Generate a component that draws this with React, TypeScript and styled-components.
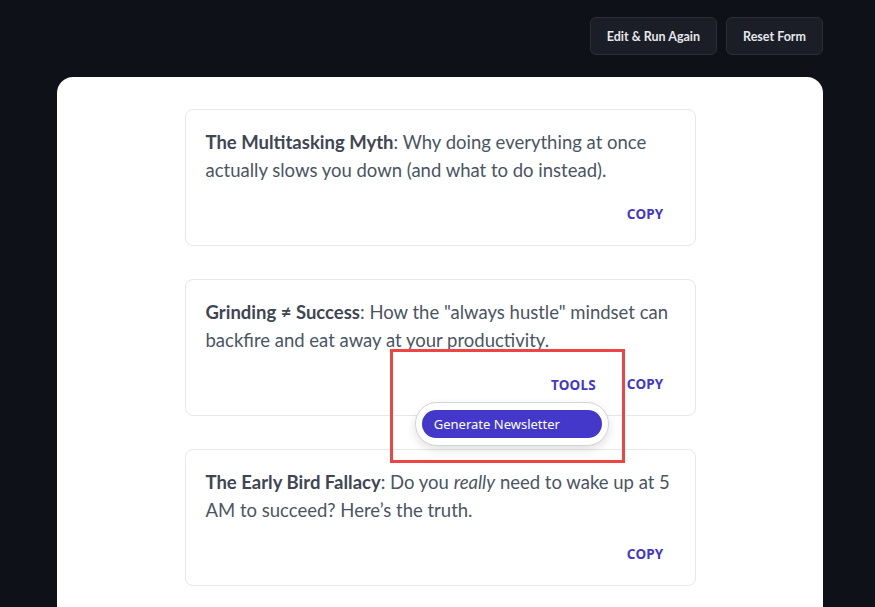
import React from 'react';
import styled, { createGlobalStyle } from 'styled-components';

const GlobalStyle = createGlobalStyle`
  html, body {
    margin: 0;
    padding: 0;
    background: #0f1119;
    font-family: "Noto Sans", "Open Sans", sans-serif;
    overflow: hidden;
  }
`;

const Page = styled.div`
  padding: 17px 52px 0 57px;
  min-height: 607px;
  box-sizing: border-box;
`;

const Toolbar = styled.div`
  display: flex;
  justify-content: flex-end;
  gap: 9px;
  margin-bottom: 22px;
`;

const ToolbarButton = styled.button`
  height: 38px;
  padding: 0 16px;
  background: #1b1e27;
  border: 1px solid #2a2e38;
  border-radius: 6px;
  color: #e5e7eb;
  font-family: "Lato", "Noto Sans", sans-serif;
  font-weight: 700;
  font-size: 12.5px;
  cursor: pointer;
`;

const Panel = styled.div`
  background: #ffffff;
  border-radius: 16px 16px 0 0;
  padding: 32px 0 40px;
  display: flex;
  flex-direction: column;
  align-items: center;
  gap: 33px;
  min-height: 520px;
`;

const Card = styled.div`
  position: relative;
  width: 511px;
  box-sizing: border-box;
  border: 1px solid #e5e7eb;
  border-radius: 8px;
  padding: 18px 20px 21px 20px;
`;

const CardText = styled.p`
  margin: 0;
  font-family: "Lato", "Noto Sans", sans-serif;
  font-size: 18.5px;
  line-height: 28px;
  color: #4b5563;

  strong {
    color: #3f4653;
    font-weight: 700;
  }
`;

const CardFooter = styled.div`
  display: flex;
  justify-content: flex-end;
  align-items: center;
  gap: 31px;
  margin-top: 20px;
  margin-right: 11px;
  height: 20px;
`;

const LinkButton = styled.button`
  position: relative;
  background: none;
  border: none;
  padding: 0;
  font-family: "Noto Sans", sans-serif;
  font-size: 13.5px;
  font-weight: 700;
  letter-spacing: 0.2px;
  color: #4338ca;
  text-transform: uppercase;
  cursor: pointer;
`;

const ToolsWrap = styled.div`
  position: relative;
`;

const Menu = styled.div`
  position: absolute;
  top: 29px;
  right: -13px;
  padding: 7px 6px;
  background: #ffffff;
  border: 1px solid #d1d5db;
  border-radius: 22px;
  box-shadow: 0 4px 10px rgba(0, 0, 0, 0.12);
  z-index: 2;
`;

const MenuItem = styled.button`
  display: block;
  width: 180px;
  height: 28px;
  padding: 0 12px;
  text-align: left;
  background: #4338ca;
  color: #ffffff;
  border: none;
  border-radius: 14px;
  font-family: "Noto Sans", sans-serif;
  font-size: 13px;
  white-space: nowrap;
  cursor: pointer;
`;

const Highlight = styled.div`
  position: absolute;
  left: 204px;
  top: 69px;
  width: 235px;
  height: 114px;
  box-sizing: border-box;
  border: 3px solid #ef4444;
  pointer-events: none;
  z-index: 3;
`;

type Idea = { title: string; body: React.ReactNode; tools?: boolean };

const ideas: Idea[] = [
  {
    title: 'The Multitasking Myth',
    body: ': Why doing everything at once actually slows you down (and what to do instead).',
  },
  {
    title: 'Grinding \u2260 Success',
    body: ': How the "always hustle" mindset can backfire and eat away at your productivity.',
    tools: true,
  },
  {
    title: 'The Early Bird Fallacy',
    body: (
      <>
        : Do you <em>really</em> need to wake up at 5 AM to succeed? Here’s the truth.
      </>
    ),
  },
];

export default function App() {
  return (
    <>
      <GlobalStyle />
      <Page>
        <Toolbar>
          <ToolbarButton>Edit &amp; Run Again</ToolbarButton>
          <ToolbarButton>Reset Form</ToolbarButton>
        </Toolbar>
        <Panel>
          {ideas.map((idea) => (
            <Card key={idea.title}>
              <CardText>
                <strong>{idea.title}</strong>
                {idea.body}
              </CardText>
              <CardFooter>
                {idea.tools && (
                  <ToolsWrap>
                    <LinkButton>Tools</LinkButton>
                    <Menu>
                      <MenuItem>Generate Newsletter</MenuItem>
                    </Menu>
                  </ToolsWrap>
                )}
                <LinkButton>Copy</LinkButton>
              </CardFooter>
              {idea.tools && <Highlight />}
            </Card>
          ))}
        </Panel>
      </Page>
    </>
  );
}
